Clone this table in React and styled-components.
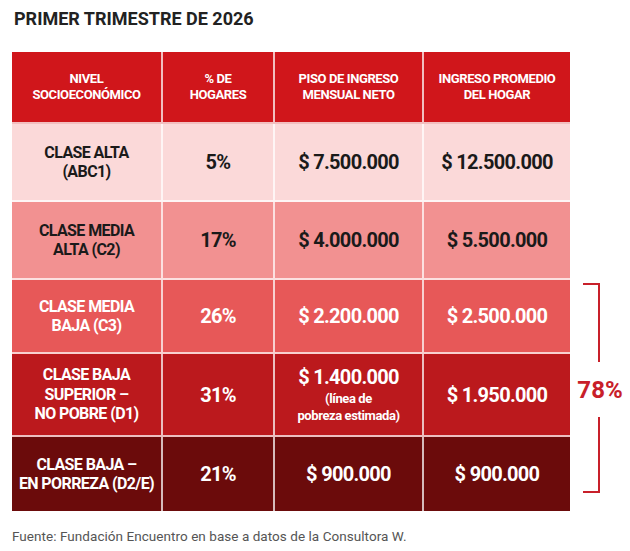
import React from "react";
import styled, { createGlobalStyle } from "styled-components";

// ============ Data ============== //
const ROWS = [
  {
    bg: "#fbd9d9",
    fg: "#1a1a1a",
    label: ["CLASE ALTA", "(ABC1)"],
    pct: "5%",
    piso: "$ 7.500.000",
    prom: "$ 12.500.000",
  },
  {
    bg: "#f29191",
    fg: "#1a1a1a",
    label: ["CLASE MEDIA", "ALTA (C2)"],
    pct: "17%",
    piso: "$ 4.000.000",
    prom: "$ 5.500.000",
  },
  {
    bg: "#e75858",
    fg: "#ffffff",
    label: ["CLASE MEDIA", "BAJA (C3)"],
    pct: "26%",
    piso: "$ 2.200.000",
    prom: "$ 2.500.000",
  },
  {
    bg: "#bb191d",
    fg: "#ffffff",
    label: ["CLASE BAJA", "SUPERIOR –", "NO POBRE (D1)"],
    pct: "31%",
    piso: "$ 1.400.000",
    note: ["(línea de", "pobreza estimada)"],
    prom: "$ 1.950.000",
  },
  {
    bg: "#6b0b0b",
    fg: "#ffffff",
    label: ["CLASE BAJA –", "EN PORREZA (D2/E)"],
    pct: "21%",
    piso: "$ 900.000",
    prom: "$ 900.000",
  },
];

const HEADERS = [
  ["NIVEL", "SOCIOECONÓMICO"],
  ["% DE", "HOGARES"],
  ["PISO DE INGRESO", "MENSUAL NETO"],
  ["INGRESO PROMEDIO", "DEL HOGAR"],
];

const RED = "#c8202a";
const LINE = "2px solid rgba(255, 255, 255, 0.72)";

// ============ CSS ============== //
const Global = createGlobalStyle`
  html, body {
    margin: 0;
    padding: 0;
    background: #ffffff;
  }
  body {
    font-family: Roboto, "Liberation Sans", sans-serif;
  }
`;

const Page = styled.div`
  width: 630px;
  height: 551px;
  box-sizing: border-box;
  padding: 7px 0 0 12px;
  background: #ffffff;
  overflow: hidden;
`;

const Title = styled.h1`
  margin: 0 0 0 2px;
  font-size: 18px;
  line-height: 24px;
  font-weight: 700;
  letter-spacing: 0;
  color: #222222;
`;

const Grid = styled.div`
  margin-top: 21px;
  display: grid;
  grid-template-columns: 151px 112px 149px 146px 60px;
  grid-template-rows: 72px 78px 78px 74px 83px 74px;
`;

const Cell = styled.div`
  box-sizing: border-box;
  display: flex;
  flex-direction: column;
  align-items: center;
  justify-content: center;
  text-align: center;
  background: ${(p) => p.$bg};
  color: ${(p) => p.$fg};
  border-right: ${(p) => (p.$lastCol ? "none" : LINE)};
  border-bottom: ${(p) => (p.$lastRow ? "none" : LINE)};
  padding: 0 6px;
`;

const HeadText = styled.div`
  font-size: 13px;
  line-height: 16px;
  font-weight: 700;
  letter-spacing: -0.4px;
`;

const Label = styled.div`
  font-size: 16px;
  line-height: 19.5px;
  font-weight: 700;
  letter-spacing: -0.6px;
`;

const Big = styled.div`
  font-size: 20px;
  line-height: 24px;
  font-weight: 700;
  letter-spacing: -0.7px;
`;

const Note = styled.div`
  margin-top: 1px;
  font-size: 13px;
  line-height: 17px;
  font-weight: 700;
  letter-spacing: -0.4px;
`;

const Bracket = styled.div`
  grid-column: 5;
  grid-row: 4 / 7;
  display: flex;
  flex-direction: column;
  padding: 3px 0 18px;
`;

const Arm = styled.div`
  margin-left: 13px;
  width: 17px;
  height: ${(p) => p.$h}px;
  box-sizing: border-box;
  border-right: 2px solid ${RED};
  border-top: ${(p) => (p.$top ? `2px solid ${RED}` : "none")};
  border-bottom: ${(p) => (p.$top ? "none" : `2px solid ${RED}`)};
`;

const Total = styled.div`
  height: 55px;
  display: flex;
  align-items: center;
  justify-content: center;
  font-size: 24px;
  font-weight: 700;
  color: ${RED};
`;

const Source = styled.p`
  margin: 17px 0 0;
  font-size: 13.5px;
  line-height: 16px;
  letter-spacing: 0.05px;
  color: #555555;
`;

// ============ Function ============== //
const Lines = ({ as: Comp, lines }) => (
  <Comp>
    {lines.map((l, i) => (
      <React.Fragment key={i}>
        {i > 0 && <br />}
        {l}
      </React.Fragment>
    ))}
  </Comp>
);

const App = () => {
  return (
    <>
      <Global />
      <Page>
        <Title>PRIMER TRIMESTRE DE 2026</Title>
        <Grid>
          {HEADERS.map((h, i) => (
            <Cell key={i} $bg="#d0161b" $fg="#ffffff" $lastCol={i === 3}>
              <Lines as={HeadText} lines={h} />
            </Cell>
          ))}
          <div />
          {ROWS.map((r, ri) => {
            const lastRow = ri === ROWS.length - 1;
            return (
              <React.Fragment key={ri}>
                <Cell $bg={r.bg} $fg={r.fg} $lastRow={lastRow}>
                  <Lines as={Label} lines={r.label} />
                </Cell>
                <Cell $bg={r.bg} $fg={r.fg} $lastRow={lastRow}>
                  <Big>{r.pct}</Big>
                </Cell>
                <Cell $bg={r.bg} $fg={r.fg} $lastRow={lastRow}>
                  <Big>{r.piso}</Big>
                  {r.note && <Lines as={Note} lines={r.note} />}
                </Cell>
                <Cell $bg={r.bg} $fg={r.fg} $lastRow={lastRow} $lastCol>
                  <Big>{r.prom}</Big>
                </Cell>
                {ri < 2 && <div />}
              </React.Fragment>
            );
          })}
          <Bracket>
            <Arm $top $h={79} />
            <Total>78%</Total>
            <Arm $h={76} />
          </Bracket>
        </Grid>
        <Source>
          Fuente: Fundación Encuentro en base a datos de la Consultora W.
        </Source>
      </Page>
    </>
  );
};

export default App;
